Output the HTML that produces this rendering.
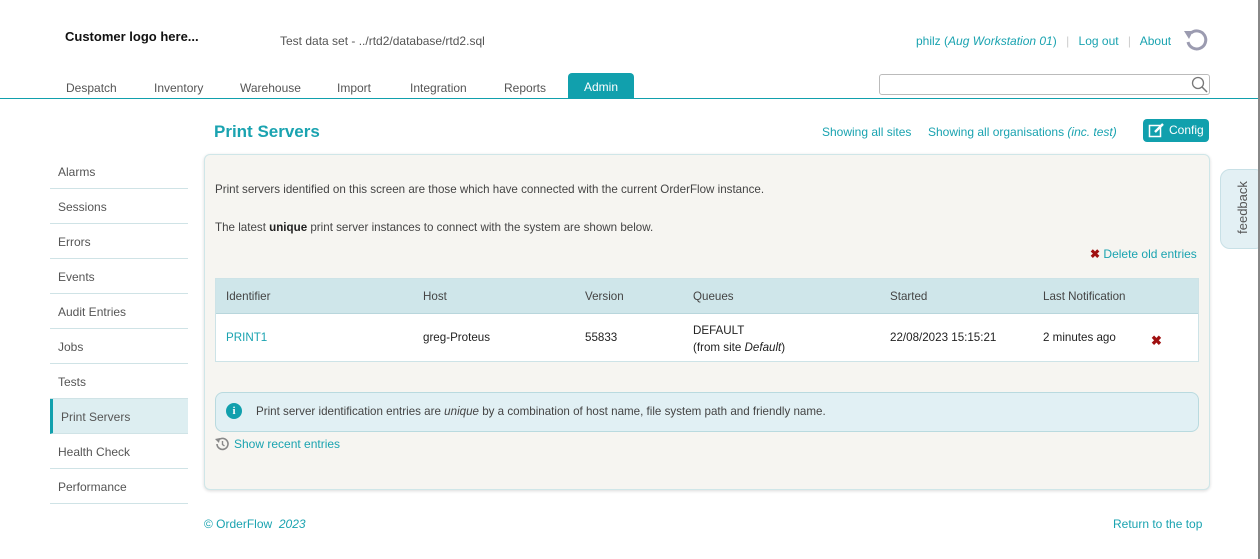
<!DOCTYPE html>
<html><head><style>
*{box-sizing:border-box;margin:0;padding:0}
body{width:1260px;height:559px;overflow:hidden;background:#fff;font-family:"Liberation Sans",sans-serif;font-size:11.6px;color:#444;position:relative}
.a{position:absolute;white-space:nowrap}
.t{color:#1aa3b0}
.nav span{position:absolute;top:81px;color:#555;font-size:12px}
.side div{position:absolute;left:50px;width:138px;height:35px;border-bottom:1px solid #cfe3e6;padding:11px 0 0 8px;color:#555;font-size:12px}
</style></head><body>
<div class="a" style="left:65px;top:29px;font-weight:bold;font-size:13px;color:#111">Customer logo here...</div>
<div class="a" style="left:280px;top:34px;color:#555;font-size:12px">Test data set - ../rtd2/database/rtd2.sql</div>
<div class="a t" style="left:916px;top:34px;font-size:12px">philz (<i>Aug Workstation 01</i>) <span style="color:#ccc;margin:0 6px">|</span> Log out <span style="color:#ccc;margin:0 6px">|</span> About</div>
<svg class="a" style="left:1182px;top:27px" width="28" height="26" viewBox="0 0 28 26"><path d="M9 6 A9 9 0 1 1 6 15" fill="none" stroke="#9b9bb0" stroke-width="3"/><path d="M2 4 L11 4 L7 12 Z" fill="#9b9bb0"/></svg>
<div class="nav">
<span style="left:66px">Despatch</span><span style="left:154px">Inventory</span><span style="left:240px">Warehouse</span><span style="left:337px">Import</span><span style="left:410px">Integration</span><span style="left:504px">Reports</span>
</div>
<div class="a" style="left:568px;top:73px;width:66px;height:25px;background:#11a0ad;border-radius:4px 4px 0 0;color:#fff;text-align:center;padding-top:7px;font-size:12px">Admin</div>
<div class="a" style="left:0;top:98px;width:1260px;height:1px;background:#11a0ad"></div>
<div class="a" style="left:879px;top:74px;width:331px;height:21px;border:1px solid #bbb;border-radius:3px"></div>
<svg class="a" style="left:1191px;top:76px" width="17" height="17"><circle cx="7" cy="7" r="5.5" fill="none" stroke="#777" stroke-width="1.3"/><line x1="11" y1="11" x2="16" y2="16" stroke="#777" stroke-width="1.5"/></svg>
<div class="a t" style="left:214px;top:122px;font-size:17px;font-weight:bold">Print Servers</div>
<div class="a t" style="left:822px;top:125px;font-size:12px">Showing all sites</div>
<div class="a t" style="left:928px;top:125px;font-size:12px">Showing all organisations <i>(inc. test)</i></div>
<div class="a" style="left:1143px;top:119px;width:66px;height:23px;background:#11a0ad;border-radius:4px;color:#fff;font-size:12px;padding:4px 0 0 26px">Config</div>
<svg class="a" style="left:1148px;top:122px" width="17" height="17"><rect x="1.5" y="3.5" width="11" height="11" fill="none" stroke="#fff" stroke-width="1.5"/><path d="M7 10 L15 2" stroke="#fff" stroke-width="2.4"/></svg>
<div class="a" style="left:1220px;top:169px;width:45px;height:80px;background:#e3f0f4;border:1px solid #c8e0e6;border-radius:10px"></div>
<div class="a" style="left:1216px;top:200px;transform:rotate(-90deg);color:#555;font-size:13px">feedback</div>
<div class="a" style="left:1258px;top:0;width:2px;height:559px;background:#888"></div>
<div class="side">
<div style="top:154px">Alarms</div><div style="top:189px">Sessions</div><div style="top:224px">Errors</div><div style="top:259px">Events</div><div style="top:294px">Audit Entries</div><div style="top:329px">Jobs</div><div style="top:364px">Tests</div>
<div style="top:399px;background:#ddeef1;border-left:3px solid #11a0ad;padding-left:8px">Print Servers</div>
<div style="top:434px">Health Check</div><div style="top:469px">Performance</div>
</div>
<div class="a" style="left:204px;top:154px;width:1006px;height:336px;background:#f6f5f1;border:1px solid #cfe6e8;border-radius:6px;box-shadow:0 1px 3px rgba(0,0,0,.15)"></div>
<div class="a" style="left:215px;top:183px">Print servers identified on this screen are those which have connected with the current OrderFlow instance.</div>
<div class="a" style="left:215px;top:221px">The latest <b style="color:#222">unique</b> print server instances to connect with the system are shown below.</div>
<div class="a t" style="left:1090px;top:247px;font-size:12px"><span style="color:#a01010;font-weight:bold">✖</span> Delete old entries</div>
<div class="a" style="left:215px;top:278px;width:984px;height:84px;border:1px solid #cde3e7;background:#fff"></div>
<div class="a" style="left:216px;top:279px;width:982px;height:35px;background:#cfe6ea;border-bottom:1px solid #b8d6dc"></div>
<div class="a" style="left:226px;top:290px">Identifier</div><div class="a" style="left:423px;top:290px">Host</div><div class="a" style="left:585px;top:290px">Version</div><div class="a" style="left:693px;top:290px">Queues</div><div class="a" style="left:890px;top:290px">Started</div><div class="a" style="left:1043px;top:290px">Last Notification</div>
<div class="a t" style="left:226px;top:331px">PRINT1</div>
<div class="a" style="left:423px;top:331px;color:#222">greg-Proteus</div>
<div class="a" style="left:585px;top:331px;color:#222">55833</div>
<div class="a" style="left:693px;top:322px;color:#222;line-height:17px">DEFAULT<br>(from site <i>Default</i>)</div>
<div class="a" style="left:890px;top:331px;color:#222">22/08/2023 15:15:21</div>
<div class="a" style="left:1043px;top:331px;color:#222">2 minutes ago</div>
<div class="a" style="left:1151px;top:333px;color:#a01010;font-weight:bold;font-size:13px">✖</div>
<div class="a" style="left:215px;top:392px;width:984px;height:40px;background:#e1f0f4;border:1px solid #b9dadf;border-radius:8px"></div>
<div class="a" style="left:226px;top:403px;width:16px;height:16px;border-radius:50%;background:#11a0ad;color:#fff;font-weight:bold;font-size:11px;text-align:center;line-height:16px;font-family:'Liberation Serif',serif">i</div>
<div class="a" style="left:256px;top:405px">Print server identification entries are <i>unique</i> by a combination of host name, file system path and friendly name.</div>
<svg class="a" style="left:214px;top:436px" width="16" height="16"><path d="M3 8 A5.5 5.5 0 1 0 4.6 4" fill="none" stroke="#888" stroke-width="1.6"/><path d="M1 3 L5 7 L6 2Z" fill="#888"/><path d="M8.5 5 V8.5 L10.5 10" stroke="#888" stroke-width="1.4" fill="none"/></svg>
<div class="a t" style="left:234px;top:437px;font-size:12px">Show recent entries</div>
<div class="a t" style="left:204px;top:517px;font-size:12px">© OrderFlow &nbsp;<i>2023</i></div>
<div class="a t" style="left:1113px;top:517px;font-size:12px">Return to the top</div>
</body></html>
